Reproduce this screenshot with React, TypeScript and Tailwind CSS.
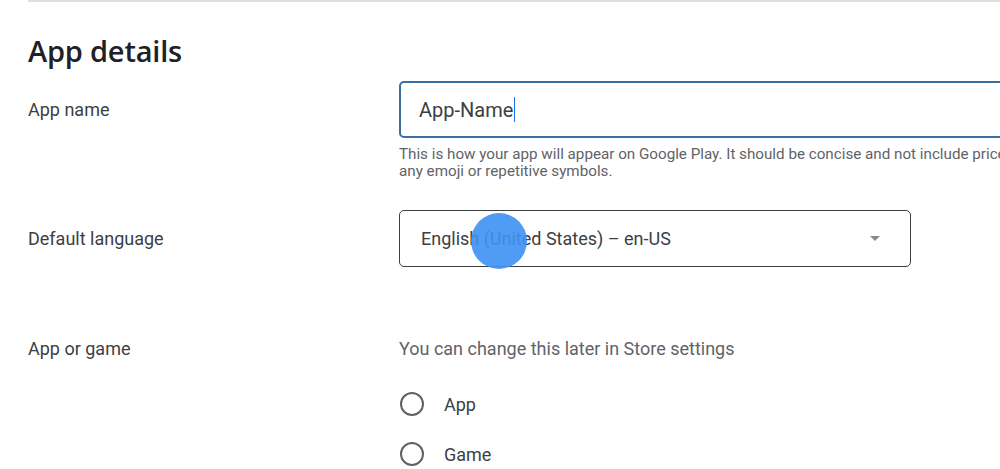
import { useState } from "react";

function Radio({ label }: { label: string }) {
  return (
    <label className="flex items-center h-[50px]">
      <span className="w-[24px] h-[24px] rounded-full border-2 border-[#5f6368] ml-[1px]" />
      <span className="ml-[20px] text-[18px] text-[#3c4043]">{label}</span>
    </label>
  );
}

export default function App() {
  const [name] = useState("App-Name");
  return (
    <div className="w-[1000px] h-[469px] overflow-hidden bg-white font-['Roboto',sans-serif] text-[#3c4043]">
      <div className="ml-[28px] border-t-2 border-[#e0e0e0]" />
      <div className="pl-[28px]">
        <h1 className="mt-[31px] text-[29px] leading-[36px] font-semibold text-[#202124] font-['Open_Sans',sans-serif] tracking-[-0.2px]">
          App details
        </h1>

        <div className="grid grid-cols-[371px_1fr] mt-[12px]">
          <div className="text-[18px] leading-[57px]">App name</div>
          <div>
            <div className="w-[700px] h-[57px] border-2 border-[#3a6fa0] rounded-[5px] flex items-center pl-[18px] text-[20px] text-[#3c4043]">
              {name}
              <span className="w-px h-[25px] bg-[#1a73e8] ml-[1px]" />
            </div>
            <p className="mt-[8px] text-[15.2px] leading-[17px] text-[#5f6368] whitespace-nowrap">
              This is how your app will appear on Google Play. It should be concise and not include price, rank,
              <br />
              any emoji or repetitive symbols.
            </p>
          </div>

          <div className="text-[18px] leading-[57px] mt-[30px]">Default language</div>
          <div className="mt-[30px] relative">
            <div className="w-[512px] h-[57px] border border-[#3c4043] rounded-[5px] flex items-center pl-[21px] pr-[30px] text-[18px] text-[#3c4043]">
              <span className="flex-1">English (United States) – en-US</span>
              <span className="w-0 h-0 border-l-[5px] border-r-[5px] border-t-[5px] border-l-transparent border-r-transparent border-t-[#8a8a8a]" />
            </div>
            <span className="absolute left-[72px] top-[3px] w-[56px] h-[56px] rounded-full bg-[#3d91f4]/90" />
          </div>

          <div className="text-[18px] leading-[24px] mt-[70px]">App or game</div>
          <div className="mt-[70px]">
            <div className="text-[18px] leading-[24px] text-[#5f6368]">You can change this later in Store settings</div>
            <div className="mt-[18px]">
              <Radio label="App" />
              <Radio label="Game" />
            </div>
          </div>
        </div>
      </div>
    </div>
  );
}
